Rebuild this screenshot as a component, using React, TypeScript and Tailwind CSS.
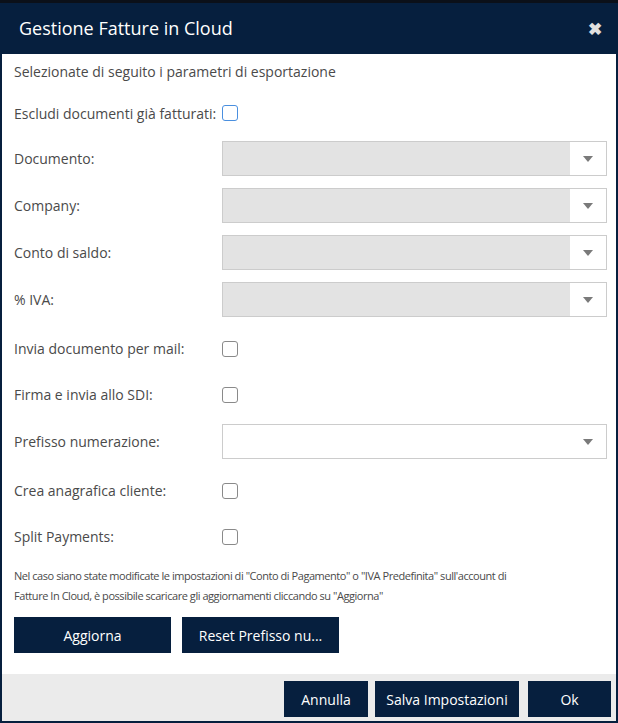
import React from "react";

type Row =
  | { kind: "select"; label: string; disabled?: boolean; mt: string }
  | { kind: "check"; label: string; mt: string };

const rows: Row[] = [
  { kind: "select", label: "Documento:", disabled: true, mt: "mt-[18px]" },
  { kind: "select", label: "Company:", disabled: true, mt: "mt-[12px]" },
  { kind: "select", label: "Conto di saldo:", disabled: true, mt: "mt-[12px]" },
  { kind: "select", label: "% IVA:", disabled: true, mt: "mt-[12px]" },
  { kind: "check", label: "Invia documento per mail:", mt: "mt-[14px]" },
  { kind: "check", label: "Firma e invia allo SDI:", mt: "mt-[11px]" },
  { kind: "select", label: "Prefisso numerazione:", mt: "mt-[12px]" },
  { kind: "check", label: "Crea anagrafica cliente:", mt: "mt-[14px]" },
  { kind: "check", label: "Split Payments:", mt: "mt-[11px]" },
];

function Checkbox({ focused }: { focused?: boolean }) {
  return (
    <span
      className={
        "block w-4 h-4 rounded-[3px] border-[1.5px] bg-white " +
        (focused ? "border-[#4a8fdf]" : "border-[#8a8a8a]")
      }
    />
  );
}

function SelectBox({ disabled }: { disabled?: boolean }) {
  return (
    <div className="flex-1 h-[35px] border border-[#cccccc] flex bg-white">
      <div className={"flex-1 " + (disabled ? "bg-[#e3e3e3]" : "bg-white")} />
      <div className="w-[36px] flex items-center justify-center">
        <svg width="10" height="6" viewBox="0 0 10 6">
          <path d="M0 0h10L5 6z" fill="#7a7a7a" />
        </svg>
      </div>
    </div>
  );
}

export default function App() {
  return (
    <div
      className="w-[618px] h-[723px] bg-[#0b1019] flex flex-col pt-[3px] text-[#4a4a4a]"
      style={{ fontFamily: '"Open Sans", "Liberation Sans", sans-serif' }}
    >
      <div className="flex-1 flex flex-col bg-[#061f3e] px-[2px] pb-[2px]">
        {/* header */}
        <div className="h-[51px] flex items-center justify-between pl-[17px] pr-[14px]">
          <span className="text-white text-[18px]">Gestione Fatture in Cloud</span>
          <span className="text-[#e0e0e0] text-[17px] font-bold leading-none">✖</span>
        </div>

        {/* body */}
        <div className="flex-1 bg-white pl-[12px] pr-[9px] pt-[8px] flex flex-col">
          <div className="h-[20px] leading-[20px] text-[14px]">
            Selezionate di seguito i parametri di esportazione
          </div>
          <div className="mt-[21px] h-[20px] flex items-center text-[14px]">
            <span className="whitespace-nowrap">Escludi documenti già fatturati:</span>
            <span className="ml-[6px]">
              <Checkbox focused />
            </span>
          </div>

          {rows.map((r) => (
            <div key={r.label} className={"h-[35px] flex items-center " + r.mt}>
              <span className="w-[208px] text-[14px] whitespace-nowrap">{r.label}</span>
              {r.kind === "select" ? <SelectBox disabled={r.disabled} /> : <Checkbox />}
            </div>
          ))}

          <p className="mt-[12px] text-[11px] leading-[20px] tracking-[-0.45px] whitespace-nowrap">
            Nel caso siano state modificate le impostazioni di "Conto di Pagamento" o "IVA Predefinita"
            sull'account di
            <br />
            Fatture In Cloud, è possibile scaricare gli aggiornamenti cliccando su "Aggiorna"
          </p>

          <div className="mt-[11px] flex gap-[11px]">
            <button className="w-[157px] h-[36px] bg-[#061f3e] text-white text-[14px]">Aggiorna</button>
            <button className="w-[157px] h-[36px] bg-[#061f3e] text-white text-[14px]">
              Reset Prefisso nu...
            </button>
          </div>
        </div>

        {/* footer */}
        <div className="h-[47px] bg-[#ebebeb] flex justify-end items-start pt-[7px] pr-[5px]">
          <button className="w-[84px] h-[36px] bg-[#061f3e] text-white text-[14px]">Annulla</button>
          <button className="ml-[7px] w-[144px] h-[36px] bg-[#061f3e] text-white text-[14px]">
            Salva Impostazioni
          </button>
          <button className="ml-[9px] w-[83px] h-[36px] bg-[#061f3e] text-white text-[14px]">Ok</button>
        </div>
      </div>
    </div>
  );
}
